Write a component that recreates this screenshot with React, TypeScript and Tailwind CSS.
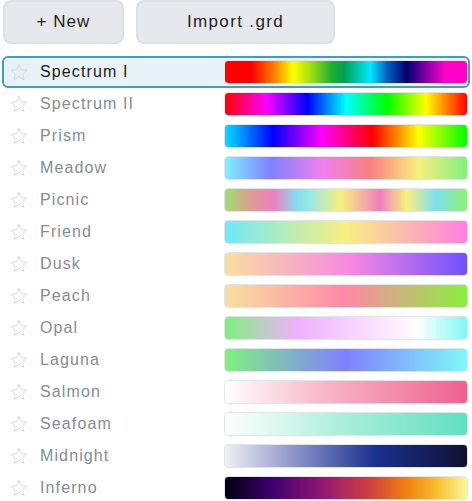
import React from 'react';

type Preset = { name: string; stops: string };

const presets: Preset[] = [
  {
    name: 'Spectrum I',
    stops:
      '#ff0000 0%, #ff0000 11%, #ff8a00 21%, #ffff00 28%, #a8e010 35%, #20b030 44%, #00a050 49%, #00e8ff 60%, #0060c0 67%, #000070 75%, #8000a8 83%, #ff00c8 91%, #ff00c8 100%',
  },
  {
    name: 'Spectrum II',
    stops: '#ff0000 0%, #ff00ff 17%, #0000ff 34%, #00ffff 50%, #00ff00 67%, #ffff00 83%, #ff0000 100%',
  },
  {
    name: 'Prism',
    stops: '#00e0ff 0%, #0000ff 20%, #ff00ff 40%, #ff0000 61%, #ffff00 80%, #00ff00 100%',
  },
  {
    name: 'Meadow',
    stops: '#80f0ff 0%, #8080ff 19%, #f080f0 40%, #f88080 60%, #f8f080 80%, #80f080 100%',
  },
  {
    name: 'Picnic',
    stops:
      '#a0e070 0%, #d8a090 10%, #f080c0 20%, #80e0f0 30%, #a0e8e0 36%, #f8f080 48%, #f080c0 64%, #f8f080 75%, #80e0f0 87%, #90f070 100%',
  },
  { name: 'Friend', stops: '#70e8f8 0%, #f8f080 50%, #ff80e0 100%' },
  { name: 'Dusk', stops: '#f8e0a0 0%, #f888e0 52%, #7050ff 100%' },
  { name: 'Peach', stops: '#f8e0a0 0%, #ff88a8 50%, #88f040 100%' },
  { name: 'Opal', stops: '#80f080 0%, #f0b0ff 30%, #fff0ff 72%, #ffffff 79%, #80f8f0 100%' },
  { name: 'Laguna', stops: '#80f080 0%, #8080ff 50%, #80f8f8 100%' },
  { name: 'Salmon', stops: '#ffffff 0%, #f8b8cc 40%, #f06090 100%' },
  { name: 'Seafoam', stops: '#ffffff 0%, #a8eed8 50%, #60e0c0 100%' },
  { name: 'Midnight', stops: '#f0f0f2 0%, #8890c8 30%, #1a3090 62%, #101030 100%' },
  {
    name: 'Inferno',
    stops: '#000010 0%, #400070 20%, #901870 40%, #d04040 60%, #f08010 75%, #f8c030 88%, #f8f8a0 100%',
  },
];

const StarIcon = () => (
  <svg width="18" height="18" viewBox="0 0 24 24" className="shrink-0">
    <polygon
      points="12,2 14.9,8.9 22.5,9.6 16.8,14.6 18.5,22 12,18.1 5.5,22 7.2,14.6 1.5,9.6 9.1,8.9"
      fill="none"
      stroke="#d0d4da"
      strokeWidth="1.1"
    />
  </svg>
);

export default function App() {
  return (
    <div className="w-[472px] min-h-[501px] bg-white px-[2px] font-['Liberation_Sans',Arial,sans-serif]">
      <div className="flex gap-3 pl-px">
        <button className="h-[44px] w-[121px] rounded-lg border-2 border-[#dcdfe4] bg-[#e6e8ed] text-[17px] tracking-[0.06em] text-[#222]">
          + New
        </button>
        <button className="h-[44px] w-[199px] rounded-lg border-2 border-[#dcdfe4] bg-[#e6e8ed] text-[17px] tracking-[0.08em] text-[#222]">
          Import .grd
        </button>
      </div>

      <div className="mt-3 flex flex-col">
        {presets.map((p, i) => {
          const selected = i === 0;
          return (
            <div
              key={p.name}
              className={
                selected
                  ? 'flex h-8 items-center rounded-md border-2 border-[#3ea0ba] bg-[#e7f2f6] pl-[6px]'
                  : 'flex h-8 items-center rounded-md border-2 border-transparent pl-[6px]'
              }
            >
              <StarIcon />
              <span
                className={
                  selected
                    ? 'ml-3 text-[16px] tracking-[0.07em] text-[#1c1c1c]'
                    : 'ml-3 text-[16px] tracking-[0.07em] text-[#858c97]'
                }
              >
                {p.name}
              </span>
              <div
                className="ml-auto h-6 w-[244px] rounded-[4px] border border-[#e2e4e8]"
                style={{ backgroundImage: `linear-gradient(to right, ${p.stops})` }}
              />
            </div>
          );
        })}
      </div>
    </div>
  );
}
